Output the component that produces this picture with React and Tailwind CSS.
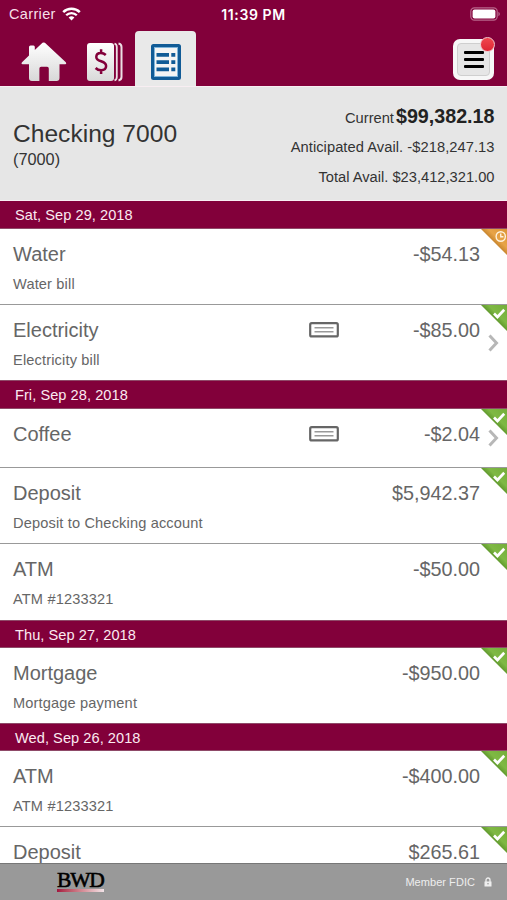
import React from "react";

const days = [
  {
    date: "Sat, Sep 29, 2018",
    items: [
      { name: "Water", memo: "Water bill", amount: "-$54.13", pending: true, size: "h-[76px]" },
      { name: "Electricity", memo: "Electricity bill", amount: "-$85.00", check: true, size: "h-[75px]" },
    ],
  },
  {
    date: "Fri, Sep 28, 2018",
    items: [
      { name: "Coffee", amount: "-$2.04", check: true, size: "h-[59px]" },
      { name: "Deposit", memo: "Deposit to Checking account", amount: "$5,942.37", size: "h-[76px]" },
      { name: "ATM", memo: "ATM #1233321", amount: "-$50.00", size: "h-[76px]" },
    ],
  },
  {
    date: "Thu, Sep 27, 2018",
    items: [
      { name: "Mortgage", memo: "Mortgage payment", amount: "-$950.00", size: "h-[75px]" },
    ],
  },
  {
    date: "Wed, Sep 26, 2018",
    items: [
      { name: "ATM", memo: "ATM #1233321", amount: "-$400.00", size: "h-[76px]" },
      { name: "Deposit", amount: "$265.61", size: "h-[76px]" },
    ],
  },
];

const StatusBar = () => (
  <div className="h-[28px] px-[9px] grid grid-cols-3 items-center text-white text-[14.5px]">
    <div className="flex items-center gap-[6px] text-[#f6dfe8]">
      <span className="pt-px tracking-[0.35px]">Carrier</span>
      <svg width="19" height="14" viewBox="0 0 19 14" fill="none" stroke="#fff">
        <path d="M1.2 5.2a11.8 11.8 0 0 1 16.6 0" strokeWidth="2.5" />
        <path d="M4.2 8.3a7.5 7.5 0 0 1 10.6 0" strokeWidth="2.3" />
        <path d="M9.5 13.4 6.6 10.6a4.2 4.2 0 0 1 5.8 0z" fill="#fff" stroke="none" />
      </svg>
    </div>
    <span className="text-center font-semibold font-['Inter','Liberation_Sans',sans-serif] text-[14px] tracking-[0.6px]">
      11:39 PM
    </span>
    <div className="flex justify-end -mr-[3px]">
      <svg width="31" height="14" viewBox="0 0 31 14">
        <rect x="0.8" y="0.8" width="26.4" height="12.4" rx="3.6" fill="none" stroke="#b8668a" strokeWidth="1.2" />
        <rect x="2.6" y="2.4" width="22.8" height="9.2" rx="2" fill="#fff" />
        <path d="M28.4 4.8c2 .8 2 3.6 0 4.4z" fill="#b8668a" />
      </svg>
    </div>
  </div>
);

const HomeIcon = () => (
  <svg width="46" height="40" viewBox="0 0 46 40">
    <defs>
      <linearGradient id="home" x1="0" y1="0" x2="0" y2="1">
        <stop offset="0" stopColor="#fff" />
        <stop offset="1" stopColor="#d8d8d8" />
      </linearGradient>
    </defs>
    <path
      d="M21.5.8q1.2-.8 2.4 0L44.800 20.200q1.100 1.800-.6 2.100H38.500V36q0 3-3 3H27.800V26.500q0-1.700-1.700-1.700H20.100q-1.700 0-1.700 1.700V39H11q-3 0-3-3V22.300H1.600Q-.2 22 1 20.200L8 13.500V5q0-1.500 1.500-1.500h3q1.300 0 1.300 1.500v3z"
      fill="url(#home)"
    />
  </svg>
);

const PayIcon = () => (
  <svg width="37" height="40" viewBox="0 0 37 40">
    <defs>
      <linearGradient id="pay" x1="0" y1="0" x2="0" y2="1">
        <stop offset="0" stopColor="#fff" />
        <stop offset="1" stopColor="#d9d9d9" />
      </linearGradient>
    </defs>
    <rect x="1" y="1" width="27" height="38" rx="3" fill="url(#pay)" />
    <path d="M28.5 1.600q2.300.6 2.300 3.400v30q0 2.800-2.300 3.400" fill="none" stroke="#ecdfe4" strokeWidth="1.800" />
    <path d="M32.500 1.600q3 .6 3 3.400v30q0 2.800-3 3.400" fill="none" stroke="#ecdfe4" strokeWidth="2" />
    <path
      d="M19.800 13c-1.400-1.300-3-2-4.900-2-2.800 0-4.600 1.500-4.600 3.900 0 2.500 2 3.400 4.800 4.400 3 1 5 2.100 5 4.700 0 2.600-2 4.200-5 4.200-2.300 0-4.100-.8-5.500-2.200M15.100 7.300v3.700M15.100 28.200v3.700"
      fill="none"
      stroke="#82003a"
      strokeWidth="2.500"
    />
  </svg>
);

const RegisterIcon = () => (
  <svg width="30" height="36" viewBox="0 0 30 36">
    <rect x="1.500" y="1.500" width="27" height="33" rx="1" fill="#f4f4f4" stroke="#115b96" strokeWidth="3" />
    <rect x="3.500" y="3.500" width="23" height="29" fill="none" stroke="#7fb4da" strokeWidth="1" />
    <g fill="#115b96">
      <path d="M5.500 9h12.500v3.800h-12.500zM5.500 16.200h12.500v3.800h-12.500zM5.500 23.400h12.500v3.800h-12.500z" />
      <path d="M20.300 9h4v3.800h-4zM20.300 16.200h4v3.800h-4zM20.300 23.400h4v3.800h-4z" />
    </g>
  </svg>
);

const NavBar = () => (
  <div className="h-[58px] pl-[21px] pr-[13px] flex items-end justify-between">
    <div className="flex items-end">
      <div className="pb-[4px]">
        <HomeIcon />
      </div>
      <div className="pb-[4px] ml-[19px]">
        <PayIcon />
      </div>
      <div className="ml-[12px] w-[61px] h-[55px] rounded-t-[4px] bg-[#e9e9e9] flex justify-center pt-[13px]">
        <RegisterIcon />
      </div>
    </div>
    <button className="relative mb-[6px] w-[41px] h-[41px] rounded-[7px] bg-[#f7f7f7] p-[4px]">
      <span className="w-full h-full rounded-[4px] border border-[#cfcfcf] bg-[#e6e6e6] flex flex-col items-center justify-center gap-[4px]">
        <span className="w-[20px] h-[3px] rounded-[1px] bg-black"></span>
        <span className="w-[20px] h-[3px] rounded-[1px] bg-black"></span>
        <span className="w-[20px] h-[3px] rounded-[1px] bg-black"></span>
      </span>
      <span className="absolute -top-[2px] -right-[1px] w-[15px] h-[15px] rounded-full border border-[#f3c6cb] bg-linear-to-b from-[#f0464e] to-[#de2433]"></span>
    </button>
  </div>
);

const Summary = () => (
  <div className="h-[115px] pl-[13px] pr-[12.5px] flex justify-between bg-[#e6e6e6] border-t border-b border-t-[#f8eef2] border-b-[#f8eef2] text-[#333]">
    <div className="pt-[33px]">
      <h1 className="text-[24.6px] leading-[28px]">Checking 7000</h1>
      <p className="text-[16.3px] leading-[20px] mt-px">(7000)</p>
    </div>
    <div className="pt-[15px] text-right text-[14.7px]">
      <p className="leading-[28px] h-[30px]">
        Current<b className="text-[19.7px] ml-[2px] text-[#222]">$99,382.18</b>
      </p>
      <p className="leading-[30px] h-[30px] tracking-[0.05px]">Anticipated Avail. -$218,247.13</p>
      <p className="leading-[30px] h-[30px]">Total Avail. $23,412,321.00</p>
    </div>
  </div>
);

const Corner = ({ pending }) => (
  <svg className="absolute top-0 right-0" width="26" height="26" viewBox="0 0 27 26" preserveAspectRatio="none">
    <defs>
      <linearGradient id="green" x1="0" y1="1" x2="1" y2="0">
        <stop offset="0.48" stopColor="#5d962b" />
        <stop offset="0.64" stopColor="#7fb944" />
        <stop offset="1" stopColor="#74ad3a" />
      </linearGradient>
      <linearGradient id="orange" x1="0" y1="1" x2="1" y2="0">
        <stop offset="0.48" stopColor="#c4822b" />
        <stop offset="0.64" stopColor="#e8a448" />
        <stop offset="1" stopColor="#dc9434" />
      </linearGradient>
    </defs>
    <path d="M0 0H27V26z" fill={pending ? "url(#orange)" : "url(#green)"} />
    {pending ? (
      <g fill="none" stroke="#fff3df" strokeWidth="1.4">
        <circle cx="20.5" cy="7.5" r="4.8" />
        <path d="M20.5 4.5v3.300h2.800" />
      </g>
    ) : (
      <path d="M13.500 8.500l3.600 3.500 7-7.200" fill="none" stroke="#fff" strokeWidth="2.800" />
    )}
  </svg>
);

const CheckIcon = () => (
  <svg width="30" height="16" viewBox="0 0 30 16" fill="none">
    <rect x="1.2" y="1.2" width="27.6" height="13.2" rx="1.5" stroke="#666" strokeWidth="2.2" />
    <path d="M5.500 5.700h19M5.500 9.700h19" stroke="#999" strokeWidth="1.500" />
  </svg>
);

const Transaction = ({ item }) => (
  <li
    className={`relative ${item.size} pl-[13px] pr-[27px] bg-white border-b border-[#999] last:border-b-0 text-[#666] flex justify-between`}
  >
    <div className="flex-1 pt-[13px]">
      <h3 className="text-[20px] leading-[24px]">{item.name}</h3>
      {item.memo && <p className="mt-[8px] text-[14.6px] leading-[20px] tracking-[0.15px]">{item.memo}</p>}
    </div>
    <div className="pt-[13px] w-[171px] flex items-center justify-between self-start">
      <span className="h-[24px] flex items-center">{item.check && <CheckIcon />}</span>
      <span className="text-[19.8px] leading-[24px]">{item.amount}</span>
    </div>
    <Corner pending={item.pending} />
    {item.check && (
      <svg
        className="absolute right-[8px] top-[calc(50%-9px)]"
        width="11"
        height="18"
        viewBox="0 0 11 18"
        fill="none"
      >
        <path d="M1.500 1.500l7 7.500-7 7.500" stroke="#b7b7b7" strokeWidth="3" />
      </svg>
    )}
  </li>
);

const Footer = () => (
  <footer className="h-[37px] shrink-0 bg-[#999] border-t border-[#777] pl-[57px] pr-[15px] flex items-start justify-between">
    <div className="pt-[8px] w-[47px]">
      <div className="font-['Liberation_Serif',serif] text-[21.5px] leading-[17px] tracking-[-1.2px] text-black [-webkit-text-stroke:0.6px_black]">
        BWD
      </div>
      <div className="h-[3px] bg-linear-to-r from-[#a3123f] to-[#f2e4e8]"></div>
    </div>
    <div className="pt-[10px] flex items-center text-[11px] leading-[16px] text-[#eee]">
      <span className="tracking-[0.05px]">Member FDIC</span>
      <svg className="ml-[9px]" width="8" height="10" viewBox="0 0 8 10">
        <path d="M2 5V3a2 2 0 0 1 4 0v2" fill="none" stroke="#eee" strokeWidth="1.3" />
        <path d="M.5 4.500h7v5h-7z" fill="#eee" />
        <circle cx="4" cy="6.8" r="0.8" fill="#999" />
      </svg>
    </div>
  </footer>
);

const dateBars = [
  "h-[28px] leading-[29px]",
  "h-[29px] leading-[29px] border-t",
  "h-[28px] leading-[28px] border-t",
  "h-[28px] leading-[28px] border-t",
];

const App = () => {
  return (
    <div className="w-[507px] h-[900px] overflow-hidden flex flex-col bg-white font-['Liberation_Sans',Arial,sans-serif]">
      <header className="h-[86px] shrink-0 bg-[#82003a]">
        <StatusBar />
        <NavBar />
      </header>
      <Summary />
      <main className="flex-1 min-h-0 overflow-hidden">
        {days.map((day, i) => (
          <section key={day.date}>
            <h2
              className={`${dateBars[i]} border-b border-[#8f4a68] bg-[#82003a] pl-[15px] text-[14.6px] tracking-[0.05px] text-[#fbeaf1]`}
            >
              {day.date}
            </h2>
            <ul>
              {day.items.map((item) => (
                <Transaction key={item.name} item={item} />
              ))}
            </ul>
          </section>
        ))}
      </main>
      <Footer />
    </div>
  );
};

export default App;
